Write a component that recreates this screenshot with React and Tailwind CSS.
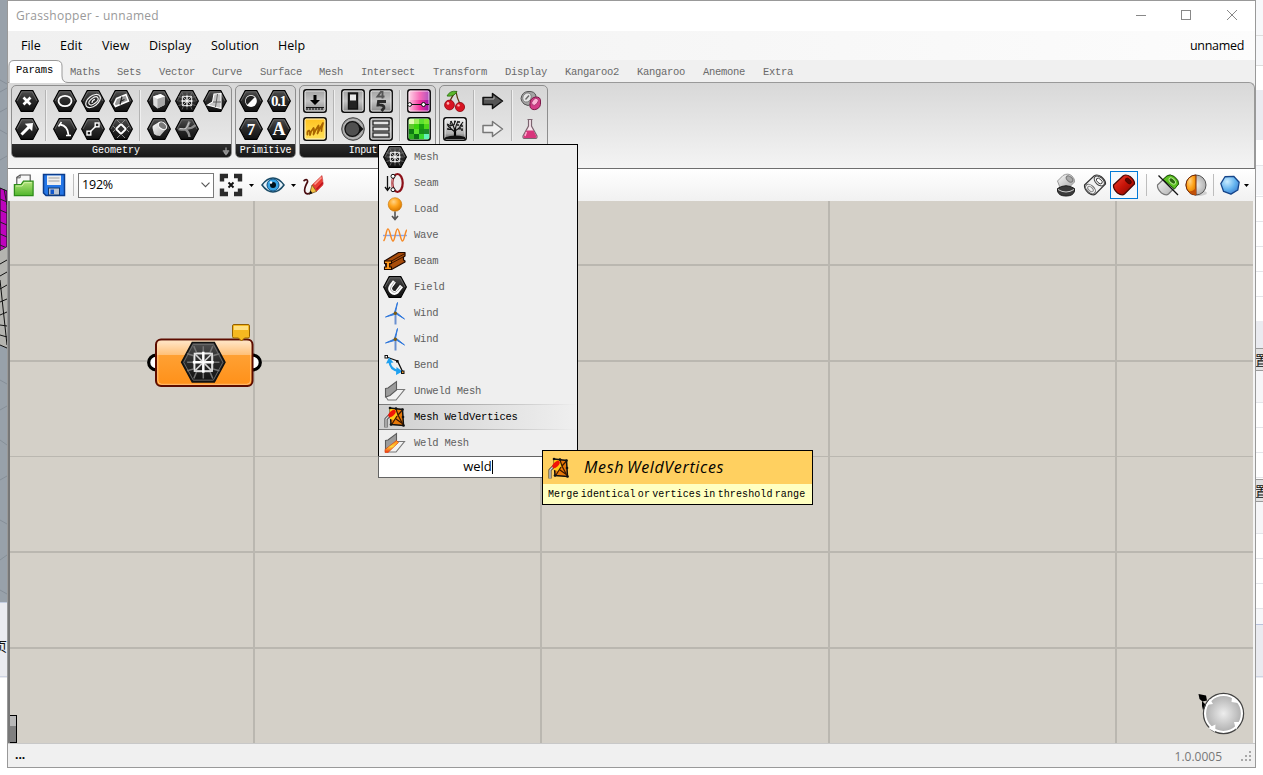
import React from "react";

const MONO = "font-['Liberation_Mono',monospace]";

/* ---------- shared gradients ---------- */
function Defs() {
  return (
    <svg width="0" height="0" className="absolute">
      <defs>
        <linearGradient id="hexg" x1="0" y1="0" x2="0" y2="1">
          <stop offset="0" stopColor="#505050" /><stop offset=".45" stopColor="#2b2b2b" /><stop offset="1" stopColor="#111" />
        </linearGradient>
        <linearGradient id="sqg" x1="0" y1="0" x2="0" y2="1">
          <stop offset="0" stopColor="#a0a0a0" /><stop offset=".5" stopColor="#c4c4c4" /><stop offset="1" stopColor="#868686" />
        </linearGradient>
        <linearGradient id="pink" x1="0" y1="0" x2="1" y2="0">
          <stop offset="0" stopColor="#ffd0e4" /><stop offset=".55" stopColor="#f5309c" /><stop offset="1" stopColor="#8a10a8" />
        </linearGradient>
        <linearGradient id="yel" x1="0" y1="0" x2="0" y2="1">
          <stop offset="0" stopColor="#ffc21e" /><stop offset="1" stopColor="#ffe25a" />
        </linearGradient>
        <linearGradient id="green" x1="0" y1="0" x2="0" y2="1">
          <stop offset="0" stopColor="#b6e57c" /><stop offset="1" stopColor="#4fb52b" />
        </linearGradient>
        <linearGradient id="hot" x1="0" y1="0" x2="0" y2="1">
          <stop offset="0" stopColor="#ff7a10" /><stop offset=".5" stopColor="#ffd83a" /><stop offset="1" stopColor="#f03010" />
        </linearGradient>
        <linearGradient id="treebg" x1="0" y1="0" x2="0" y2="1">
          <stop offset="0" stopColor="#f0f0f0" /><stop offset=".7" stopColor="#b0b0b0" /><stop offset="1" stopColor="#444" />
        </linearGradient>
        <linearGradient id="org" x1="0" y1="0" x2="0" y2="1">
          <stop offset="0" stopColor="#ffe9cf" /><stop offset=".33" stopColor="#ffc078" /><stop offset=".34" stopColor="#ffa033" /><stop offset="1" stopColor="#ff9018" />
        </linearGradient>
        <radialGradient id="ball" cx=".4" cy=".3" r=".7">
          <stop offset="0" stopColor="#ffd488" /><stop offset=".5" stopColor="#ffa51e" /><stop offset="1" stopColor="#d87800" />
        </radialGradient>
        <radialGradient id="blue" cx=".35" cy=".3" r=".75">
          <stop offset="0" stopColor="#c9ecff" /><stop offset=".6" stopColor="#62b2ee" /><stop offset="1" stopColor="#3f7fd0" />
        </radialGradient>
        <radialGradient id="silver">
          <stop offset="0" stopColor="#ededed" /><stop offset="1" stopColor="#b0b0b0" />
        </radialGradient>
        <linearGradient id="red" x1="0" y1="0" x2="1" y2="1">
          <stop offset="0" stopColor="#f04434" /><stop offset=".5" stopColor="#c81408" /><stop offset="1" stopColor="#780400" />
        </linearGradient>
        <linearGradient id="wht" x1="0" y1="0" x2="1" y2="1">
          <stop offset="0" stopColor="#fff" /><stop offset="1" stopColor="#a5a5a5" />
        </linearGradient>
      </defs>
    </svg>
  );
}

const Svg = ({ children, s = 24 }) => (
  <svg width={s} height={s} viewBox="0 0 24 24" fill="none" className="block shrink-0">{children}</svg>
);

/* ---------- hexagon icons ---------- */
const Hex = ({ children }) => (
  <Svg>
    <path d="M6.2 1.6H17.8L23.4 12L17.8 22.4H6.2L.6 12Z" fill="url(#hexg)" stroke="#000" strokeWidth="1.1" strokeLinejoin="round" />
    <path d="M6.9 2.8H17.1L22 12M2 12L6.9 2.8" stroke="#777" strokeWidth=".7" />
    {children}
  </Svg>
);
const MeshGlyph = () => (
  <g fill="none">
    <path d="M7 3.500L8.500 7H15.500L17 3.500M7 20.500L8.500 17H15.500L17 20.500M3.500 7.500L7 8.500V15.500L3.500 16.500M20.500 7.500L17 8.500V15.500L20.500 16.500M12 3.500V7M12 17V20.500M3.500 12H7M17 12H20.500" stroke="#747474" strokeWidth=".8" />
    <rect x="7.400" y="7.400" width="9.200" height="9.200" stroke="#e8e8e8" strokeWidth=".9" />
    <path d="M12 6.500V17.500M6.500 12H17.500" strokeWidth="1.300" stroke="#fff" />
    <path d="M7.500 7.500L16.500 16.500M16.500 7.500L7.500 16.500" strokeWidth=".8" stroke="#d4d4d4" />
    <path d="M10.800 12L12 10.800L13.200 12L12 13.200Z" fill="#fff" />
  </g>
);
const HexPoint = () => <Hex><path d="M8.500 8.500L15.500 15.500M15.500 8.500L8.500 15.500" stroke="#fff" strokeWidth="2.700" /></Hex>;
const HexVector = () => <Hex><path d="M6.500 17.500L14 10" stroke="#fff" strokeWidth="3" /><path d="M9.800 6.800L18 6L17.200 14.200Z" fill="#fff" /></Hex>;
const HexCircle = () => <Hex><ellipse cx="12" cy="12" rx="6.500" ry="5.200" stroke="#fff" strokeWidth="1.800" /></Hex>;
const HexSpiral = () => <Hex><g stroke="#eee" strokeWidth="1.200" transform="rotate(-38 12 12)"><ellipse cx="12" cy="12" rx="8.500" ry="5" /><ellipse cx="12.500" cy="12.200" rx="5.400" ry="2.800" /><path d="M10 12.800Q12 10.800 14.500 12" /></g></Hex>;
const HexPlane = () => <Hex><path d="M7.500 9.500L17 5.500L19.500 12L6.500 17.500L5 15Z" fill="#999" stroke="#fff" strokeWidth="1.600" /><path d="M11 12.500L15.500 10.500M13 7.500L11 15.500" stroke="#222" strokeWidth="1.200" /></Hex>;
const HexArc = () => <Hex><path d="M7 7.500Q15 9 15.500 18" stroke="#fff" strokeWidth="1.800" /><path d="M5.500 9.500L8.500 5M13 18.500H18" stroke="#fff" strokeWidth="1.500" /></Hex>;
const HexLine = () => <Hex><path d="M9 15L15 9" stroke="#fff" strokeWidth="1.500" /><rect x="6" y="14.200" width="3.800" height="3.800" fill="#222" stroke="#fff" strokeWidth="1.400" /><rect x="14.200" y="6" width="3.800" height="3.800" fill="#222" stroke="#fff" strokeWidth="1.400" /></Hex>;
const HexRect = () => <Hex><path d="M12 7L17 12L12 17L7 12Z" fill="#333" stroke="#fff" strokeWidth="1.900" /><path d="M12 7L16 3M12 7L8 3M17 12L20 9M17 12L20 15M7 12L4 9M7 12L4 15M12 17L8 21M12 17L16 21" stroke="#8a8a8a" /></Hex>;
const HexBox = () => <Hex><path d="M6 7.500L13.500 5L18 7.500L17.500 16L10.500 19.500L6.300 16Z" fill="#ddd" /><path d="M6 7.500L10.500 10L18 7.500L13.500 5Z" fill="#fff" /><path d="M10.500 10V19.500L17.500 16L18 7.500Z" fill="#a8a8a8" /></Hex>;
const HexMesh = () => <Hex><MeshGlyph /></Hex>;
const HexSurf = () => <Hex><path d="M11 5L18 4.500V19.500L4.500 16L9.500 13Z" fill="#c4c4c4" stroke="#fff" strokeWidth="1.100" /><path d="M10 13L18 13M14.500 5L12.500 18" stroke="#555" strokeWidth=".9" /></Hex>;
const HexBrep = () => <Hex><path d="M5.500 11Q5 9 7 8L12.500 4.800L19.500 11.500L13 19Q9 19 7 17Z" fill="url(#wht)" /><ellipse cx="15.500" cy="8.800" rx="4.600" ry="3.200" transform="rotate(40 15.500 8.800)" fill="#777" stroke="#fff" strokeWidth="1" /></Hex>;
const HexSub = () => <Hex><path d="M3.500 12Q8 13 10.500 12.500Q13 9 14.500 4.500M10.500 12.500Q14 15 14.500 20M12.500 11.500Q17 11.500 20.500 8" stroke="#8c8c8c" strokeWidth="2.400" /><path d="M5 11.500Q9 12 11 11.500Q13 9 13.800 5.500" stroke="#d8d8d8" strokeWidth=".8" /></Hex>;
const HexBool = () => <Hex><circle cx="12" cy="12" r="5.900" fill="#fff" /><path d="M8.300 15.700A5.200 5.200 0 0 1 15.700 8.300Z" fill="#222" /></Hex>;
const HexTxt = ({ t, size }) => (
  <Hex><text x="12" y={size > 15 ? 18 : 17} textAnchor="middle" fontFamily="Liberation Serif, serif" fontWeight="700" fontSize={size} fill="#fff" textLength={t === "0.1" ? 16 : undefined}>{t}</text></Hex>
);
const HexField = () => (
  <Hex><path d="M11.500 6.500L8 11A4.300 4.300 0 0 0 14 17L18.500 11" stroke="#fff" strokeWidth="3.800" /><path d="M13.500 8L11 11.300A1.200 1.200 0 0 0 12.600 13L15.500 9.500" stroke="#222" strokeWidth="1" /><path d="M11.300 7L8.300 11.300A3.800 3.800 0 0 0 14 16.300L18 11.500" stroke="#a8a8a8" strokeWidth=".9" /></Hex>
);

/* ---------- square icons ---------- */
const Sq = ({ fill = "url(#sqg)", children }) => (
  <Svg><rect x=".8" y=".8" width="22.400" height="22.400" rx="2.500" fill={fill} stroke="#0c0c0c" strokeWidth="1.500" /><rect x="2" y="2" width="20" height="20" rx="1.500" stroke="#fff" strokeOpacity=".7" />{children}</Svg>
);
const SqButton = () => <Sq><path d="M10.500 6H13.500V11H17L12 16L7 11H10.500Z" fill="#000" /><path d="M3 18.500H21M4 18V21M7 18V21M10 18V21M13 18V21M16 18V21M19 18V21" stroke="#111" strokeWidth="1.100" /></Sq>;
const SqScribble = () => <Sq fill="url(#yel)"><path d="M4.500 17.500Q4 14 6 13.500Q7 14 7 18Q8 14 10.500 11Q11.500 12 10.500 17.500Q13 12 15.500 8.500Q16 11 14.500 16.500Q17 11 20 6Q18.500 11 18.500 14" stroke="#a86400" strokeWidth="1.800" strokeLinecap="round" strokeLinejoin="round" /></Sq>;
const SqToggle = () => <Sq><rect x="7.500" y="4" width="9" height="16" fill="#222" stroke="#111" strokeWidth="1.400" /><rect x="9" y="5.500" width="6" height="6" fill="#e8e8e8" /></Sq>;
const SqDigit = () => <Sq><path d="M12.500 2L8.500 7.500H15.500M13.500 2V9.500" stroke="#555" strokeWidth="1.900" /><path d="M17 12.500H9.500L9 16Q15.500 15.500 15 19L12.500 22" stroke="#2a2a2a" strokeWidth="2.800" /></Sq>;
const Knob = () => <Svg><circle cx="12" cy="12" r="11.300" fill="#999" stroke="#444" strokeWidth="1" /><circle cx="12" cy="12" r="9.400" fill="#999" stroke="#ccc" strokeWidth=".8" /><path d="M17 6.500L22.500 12L17 17.500Z" fill="#111" /><circle cx="11.400" cy="12" r="7.400" fill="#505050" stroke="#111" strokeWidth="1.300" /></Svg>;
const SqList = () => <Sq>{[4, 10, 16].map((y) => <rect key={y} x="4" y={y} width="16" height="4" fill="#e4e4e4" stroke="#222" strokeWidth="1.200" />)}</Sq>;
const SqGraph = () => <Sq fill="url(#pink)"><rect x="2" y="2" width="20" height="9" fill="#fff" opacity=".28" /><path d="M2 15.500H22" stroke="#111" strokeWidth="1.200" /><circle cx="2.700" cy="15.500" r="1.900" fill="#fff" stroke="#111" /><circle cx="16.500" cy="15.500" r="2" fill="#fff" stroke="#111" /></Sq>;
const GREENS = ["#e0fcb0", "#a0f060", "#5ce030", "#7ce830", "#60c830", "#3cd60c", "#18a00f", "#4cd818", "#0c7a12", "#5ae02f", "#159018", "#1c8c28", "#30b020", "#0c7014", "#38d82c", "#40d888"];
const SqImage = () => <Sq fill="#1b9d16">{GREENS.map((c, i) => <rect key={i} x={2 + (i % 4) * 5} y={2 + Math.floor(i / 4) * 5} width="5" height="5" fill={c} />)}<rect x="17" y="17" width="5" height="5" fill="#62f5b8" /></Sq>;
const Cherry = () => <Svg><path d="M7 13Q8 8 13 3Q14 9 17 15" stroke="#5a3b12" strokeWidth="1.300" /><path d="M4 7Q7 1 14 2.500Q11 8 4 7Z" fill="#5cb82a" stroke="#2c6e10" strokeWidth=".8" /><circle cx="6.500" cy="16" r="4.900" fill="#d81422" stroke="#8c0810" strokeWidth=".8" /><circle cx="17" cy="18" r="4.600" fill="#d81422" stroke="#8c0810" strokeWidth=".8" /><circle cx="5" cy="14.400" r="1.300" fill="#ffb0b0" /><circle cx="15.500" cy="16.400" r="1.200" fill="#ffb0b0" /></Svg>;
const Tree = () => <Sq fill="url(#treebg)"><path d="M12 20V11" stroke="#000" strokeWidth="2.200" /><path d="M12 15Q8 12 5 9M12 14Q16 12 19 7M12 13Q10 8 8 4M12 13Q13 8 15 4M5 12.500H9M15 12H20M4 7L8 9M17 9L20 5M11 8L12 4M7 6L9 9" stroke="#111" strokeWidth="1.100" /><g fill="#222">{[[5, 8], [8, 5], [12, 4.5], [16, 5], [19, 9], [5, 12], [19, 13], [10, 8], [15, 8], [7, 10.5], [17, 11]].map(([x, y], i) => <circle key={i} cx={x} cy={y} r="1.1" />)}</g><path d="M2 20.500Q11 17 22 20V22H2Z" fill="#111" /></Sq>;
const ArrowDark = () => <Svg><path d="M2 8.500H11.500V4.500L21.500 12L11.500 19.500V15.500H2Z" fill="#555" stroke="#111" strokeWidth="1.500" strokeLinejoin="round" /><path d="M3.500 10H13V7.500" stroke="#aaa" /></Svg>;
const ArrowLight = () => <Svg><path d="M2 8.500H11.500V4.500L21.500 12L11.500 19.500V15.500H2Z" fill="#f0f0f0" stroke="#777" strokeWidth="1.500" strokeLinejoin="round" /></Svg>;
const Capsules = () => <Svg><path d="M2 9.500Q3 3 9 2.500Q16 2 17 7Q18 12 13 15Q9 18 5 15Q2 12 2 9.500Z" fill="#a4a4a4" stroke="#555" /><ellipse cx="8" cy="8.500" rx="4" ry="4.800" transform="rotate(35 8 8.500)" fill="#e4e4e4" stroke="#777" strokeWidth=".8" /><path d="M6.500 10.500L10 6.500" stroke="#666" strokeWidth="1.300" /><path d="M11 14.500Q11 9 16.500 8Q22 7.500 21.500 13Q22 18 18 20Q13 22 11 18Z" fill="#d43c88" stroke="#7c1848" strokeWidth="1" /><ellipse cx="16" cy="12.800" rx="2.600" ry="4" transform="rotate(40 16 12.800)" fill="#fcb4d6" stroke="#a03068" strokeWidth=".8" /></Svg>;
const Flask = () => <Svg><path d="M8.500 2.500H13.500M9.500 3V9L4 19Q3.500 21.500 6 21.500H16Q18.500 21.500 18 19L12.500 9V3" fill="#f6e4ec" stroke="#7c6470" strokeWidth="1.200" /><path d="M7.500 13.500H14.500L17.500 19.500Q17.500 21 16 21H6Q4 21 4.500 19.500Z" fill="#d8347c" /><path d="M7.500 15L6 19" stroke="#ffb4d4" strokeWidth="1.300" /></Svg>;

/* ---------- menu icons ---------- */
const Seam = () => <Svg><path d="M4.500 5V19M2 16L4.500 19.500L7 16" stroke="#111" strokeWidth="1.300" /><ellipse cx="14.500" cy="12" rx="5.200" ry="9" stroke="#8c1018" strokeWidth="2.200" /><path d="M9.500 7.500Q8.500 12 9.500 17" stroke="#e8a0a0" /><circle cx="10" cy="5.300" r="2" fill="#fff" stroke="#111" /><circle cx="10" cy="18.700" r="2" fill="#fff" stroke="#111" /></Svg>;
const Load = () => <Svg><circle cx="12" cy="7.500" r="6.800" fill="url(#ball)" stroke="#c87400" strokeWidth=".6" /><path d="M12 14.500V22M9 19L12 22.500L15 19" stroke="#555" strokeWidth="1.600" /></Svg>;
const Wave = () => <Svg><path d="M0 12.500H24" stroke="#86a4ec" strokeWidth="1.400" /><path d="M.5 18C3 16 3 6 5 6S8 18 10 18S12.500 6 14.500 6S17.500 18 19.500 18S22 8 24 7" stroke="#f58a28" strokeWidth="1.500" /></Svg>;
const Beam = () => <Svg><path d="M1.500 12L15.500 3.500H22V7L20.500 8V11L22 12V13L8.500 20.500H4Z" fill="#a84c0a" stroke="#1e0800" strokeWidth="1.200" strokeLinejoin="round" /><path d="M8.500 12L22 4.500M7 15L20 8" stroke="#3c1600" /><path d="M1.500 12H8.500V14.500H6.700V18H8.500V20.500H1.500V18H3.300V14.500H1.500Z" fill="#ff9a1e" stroke="#1e0800" strokeWidth="1.100" /></Svg>;
const Wind = () => <Svg><path d="M12.500 11.500L14.500 1.500L11.500 11.500M12.500 12.500L21.500 18L13.500 11.500M11.500 12L2.500 16L11.500 13.500" fill="#3078dc" stroke="#3078dc" strokeWidth="1" /><path d="M12.500 13V23.500" stroke="#6a90d0" strokeWidth="2" /><circle cx="12.300" cy="12.200" r="1.700" fill="#7c5a10" /></Svg>;
const Bend = () => <Svg><path d="M3.500 4L14.500 8L19.500 18.500" stroke="#111" strokeWidth="1.300" /><path d="M6.500 8Q7 17 16 18" stroke="#1ea0f0" strokeWidth="2.300" /><path d="M3 10.500L6 4.500L10.500 9.500ZM13.500 14L19.500 18.500L13 22Z" fill="#1ea0f0" /><rect x="2" y="2.500" width="2.500" height="2.500" fill="#fff" stroke="#111" /><rect x="13" y="7" width="2.500" height="2.500" fill="#111" /><rect x="18.500" y="18" width="2.500" height="2.500" fill="#f8a030" stroke="#111" /></Svg>;
const WeldM = ({ hot }) => <Svg><path d="M3 18L13 10.500H21.500L13 21H5Z" fill="#f2f2f2" stroke="#777" strokeWidth="1.100" /><path d="M2.500 9.500L5 9L13.500 2.500V11L7 16.500L2.500 18Z" fill="#9c9c9c" stroke="#5c5c5c" strokeWidth="1.100" />{hot && <path d="M2 18.500L13.500 9.500L15.500 11.500L5 21.500H2Z" fill="url(#hot)" stroke="#d84010" strokeWidth=".7" />}</Svg>;
const WeldV = () => <Svg><path d="M7 3L19.500 4.500L20.500 20.500L8 19.500Z" fill="#e87808" stroke="#111" strokeWidth="1.500" /><path d="M6.500 3.500L13 5L15 10L11 15L7 14Z" fill="#ffc818" /><path d="M13 4L15 10L19.500 5M15 10L20.500 20.500M14 11L9 19M13 14L20 19" stroke="#3a1800" strokeWidth="1.200" /><path d="M3 22.500V14L8.500 8.500" stroke="#333" strokeWidth="3" /><path d="M3 22.500V14L8 9" stroke="#d8d8d8" strokeWidth="1.400" /><ellipse cx="9" cy="8.500" rx="4.600" ry="2.400" transform="rotate(-45 9 8.500)" fill="#f01408" /><g fill="#111">{[[7, 3], [19.5, 4.5], [20.5, 20.5], [8, 19.5], [13, 3.5], [20, 12]].map(([x, y], i) => <circle key={i} cx={x} cy={y} r="1.3" />)}</g></Svg>;

/* ---------- toolbar icons ---------- */
const Folder = () => <Svg s={23}><path d="M5 13V3.500L8.500 1H19V13Z" fill="#f8f8f8" stroke="#555" strokeWidth="1.200" /><path d="M8.500 1V4H5" stroke="#555" /><path d="M2.500 11H9.500L12 7.500H22V22.500H2.500Z" fill="url(#green)" stroke="#2c8c18" strokeWidth="1.300" /><path d="M4 12.500H10.500L13 9H20.500" stroke="#d5f5ae" /></Svg>;
const Save = () => <Svg><path d="M1.500 1.500H22.500V22.500H4L1.500 20Z" fill="#2476e6" stroke="#0b3c8c" strokeWidth="1.500" /><rect x="5" y="2.500" width="14" height="9.500" fill="#eee" /><path d="M6.500 5H17.500M6.500 8H17.500" stroke="#bbb" strokeWidth="1.300" /><rect x="6.500" y="15" width="11" height="7" fill="#bcc4cf" stroke="#133a70" /><rect x="8.500" y="16.500" width="3.500" height="4.500" fill="#1258cc" /></Svg>;
const Focus = () => <Svg><path d="M3 8.500V3H9M15 3H21V8.500M21 15.500V21H15M9 21H3V15.500" stroke="#2b2b2b" strokeWidth="4.400" /><path d="M9.500 9.500L14.500 14.500M14.500 9.500L9.500 14.500" stroke="#111" strokeWidth="1.900" /></Svg>;
const Eye = () => <Svg><path d="M1 12Q6 5 12 5T23 12Q18 19 12 19T1 12Z" fill="#e6f2fa" stroke="#184a66" strokeWidth="1.500" /><circle cx="12" cy="12" r="6" fill="#38a4e4" stroke="#105080" /><circle cx="12" cy="12" r="3" fill="#001018" /><circle cx="10" cy="9.500" r="1.300" fill="#fff" /></Svg>;
const Pencil = () => <Svg><path d="M1.500 8Q6 5 5.500 9Q1 17 3.500 20Q6 22 10 19" stroke="#4a0c10" strokeWidth="1.700" /><path d="M10 12L20 2.500Q21 7 21 12L14.500 18.500Z" fill="#e83c34" stroke="#c84444" strokeWidth=".6" /><path d="M12.500 11.500L19.500 4.500" stroke="#ff9c90" strokeWidth="1.600" /><path d="M14.500 16.500L21 9.500" stroke="#c01420" strokeWidth="1.800" /><path d="M10 12L14.500 18.500L7.500 21Z" fill="#f2c040" stroke="#6c4410" strokeWidth=".7" /><path d="M8.500 17.500L10.500 20.300L7 21.500Z" fill="#111" /></Svg>;
const Cyl = ({ fill, stroke, hole }) => (
  <g><path d="M1.500 12L11 3Q14 .8 18 3.500Q23 7.500 22.500 11L12.500 21Q10 23 5.500 20Q1 16 1.500 12Z" fill={fill} stroke={stroke} strokeWidth="1.200" /><ellipse cx="16.300" cy="8" rx="3.500" ry="2" transform="rotate(42 16.300 8)" fill={hole} stroke={stroke} strokeWidth=".9" /></g>
);
const PrevNone = () => <Svg><path d="M3.500 8L9 2.500Q14 -.5 18 3Q21 6 20.500 9L15 14.500H6Z" fill="url(#wht)" stroke="#999" /><ellipse cx="15.500" cy="6" rx="3.800" ry="2.300" transform="rotate(40 15.500 6)" fill="#aaa" stroke="#777" /><path d="M3.500 18V15.500Q12 10 20.500 15.500V18Q19.500 23 12 23T3.500 18Z" fill="#3a3a3a" stroke="#1c1c1c" /><path d="M4 16.500Q12 21.500 20 16.500" stroke="#ddd" strokeWidth=".9" /></Svg>;
const PrevWire = () => <Svg><Cyl fill="#f3f3f3" stroke="#333" hole="#fff" /><ellipse cx="16.300" cy="8" rx="6" ry="3.800" transform="rotate(42 16.300 8)" stroke="#444" /><ellipse cx="7.500" cy="16" rx="5.700" ry="3.600" transform="rotate(42 7.500 16)" stroke="#666" /><ellipse cx="7.500" cy="16" rx="3.400" ry="1.900" transform="rotate(42 7.500 16)" stroke="#888" /></Svg>;
const PrevRed = () => <Svg><Cyl fill="url(#red)" stroke="#4a0400" hole="#5c0602" /></Svg>;
const PrevSel = () => <Svg><Cyl fill="url(#wht)" stroke="#777" hole="#285c10" /><path d="M7 6.500L11 3Q14 .8 18 3.500Q23 7.500 22.500 11L18.500 16Z" fill="#5cc022" stroke="#205c08" /><ellipse cx="16.300" cy="8" rx="3.800" ry="2.200" transform="rotate(42 16.300 8)" fill="#2c6a10" stroke="#b8ee90" /><path d="M2.500 2.500L22 22" stroke="#111" strokeWidth="1.300" /></Svg>;
const HalfBall = () => <Svg><ellipse cx="14" cy="20" rx="9" ry="3" fill="#999" opacity=".4" /><circle cx="12" cy="12" r="10" fill="url(#silver)" stroke="#555" /><path d="M12 2A10 10 0 0 0 12 22Z" fill="url(#ball)" stroke="#7a2800" /><path d="M4.500 18.500Q9 18.500 12 15V22Q8 22 4.500 18.500Z" fill="#c05008" /></Svg>;
const Poly = () => <Svg s={22}><path d="M6.500 3L16 2.500L22 9L20.500 17.500L13 22L5 19L2 10.500Z" fill="url(#blue)" stroke="#154488" strokeWidth="1.400" strokeLinejoin="round" /></Svg>;
const Caret = () => <svg width="5" height="3" viewBox="0 0 5 3" className="block shrink-0"><path d="M0 0H5L2.500 3Z" fill="#000" /></svg>;

/* ---------- ribbon ---------- */
const GROUPS = [
  { name: "Geometry", more: true, width: "w-[221px]", label: "", clusters: [
    [[HexPoint, HexVector]],
    [[HexCircle, HexArc], [HexSpiral, HexLine], [HexPlane, HexRect]],
    [[HexBox, HexBrep], [HexMesh, HexSub], [HexSurf, null]],
  ] },
  { name: "Primitive", width: "w-[61px]", label: "tracking-[-0.3px]", clusters: [
    [[HexBool, () => <HexTxt t="7" size={17} />], [() => <HexTxt t="0.1" size={15} />, () => <HexTxt t="A" size={18} />]],
  ] },
  { name: "Input", width: "w-[137px]", label: "-ml-[9px] tracking-[-0.3px]", clusters: [
    [[SqButton, SqScribble]],
    [[SqToggle, Knob], [SqDigit, SqList]],
    [[SqGraph, SqImage]],
  ] },
  { name: "Util", width: "w-[109px]", label: "", clusters: [
    [[Cherry, Tree]], [[ArrowDark, ArrowLight]], [[Capsules, Flask]],
  ] },
];

function Group({ g }) {
  return (
    <div className={"flex h-[73px] shrink-0 flex-col overflow-hidden rounded-[5px] border border-[#8e8e8e] bg-linear-to-b from-[#d6d6d6] to-[#ececec] " + g.width}>
      <div className="flex h-[58px] shrink-0 px-px pt-px">
        {g.clusters.map((cl, i) => (
          <React.Fragment key={i}>
            {i > 0 && <div className="mx-[4px] my-[3px] w-[2px] shrink-0 border-l border-[#b4b4b4] bg-[#efefef]" />}
            {cl.map((col, j) => (
              <div key={j} className="flex w-7 shrink-0 flex-col">
                {col.map((Ic, k) => <div key={k} className="grid h-7 place-items-center">{Ic && <Ic />}</div>)}
              </div>
            ))}
          </React.Fragment>
        ))}
      </div>
      <div className={"-mx-px flex h-[14px] shrink-0 items-start justify-center overflow-hidden bg-linear-to-b from-[#2e2e2e] to-[#161616] text-[10px] leading-[13px] text-white " + MONO + (g.more ? " pl-[7px]" : "")}>
        <span className={g.more ? "flex-1 text-center" : g.label}>{g.name}</span>
        {g.more && <svg width="18" height="13" viewBox="0 0 18 13"><path d="M12 3.500V10M8.800 7H15.200M10 8L12 10.500L14 8" stroke="#999" strokeWidth="1.300" fill="none" /></svg>}
      </div>
    </div>
  );
}

const TABS = [["Maths", "w-[47px]"], ["Sets", "w-[42px]"], ["Vector", "w-[53px]"], ["Curve", "w-[48px]"], ["Surface", "w-[59px]"], ["Mesh", "w-[42px]"], ["Intersect", "w-[72px]"], ["Transform", "w-[72px]"], ["Display", "w-[60px]"], ["Kangaroo2", "w-[72px]"], ["Kangaroo", "w-[66px]"], ["Anemone", "w-[60px]"], ["Extra", "w-[40px]"]];
const MENU = [["File", "w-[39px]"], ["Edit", "w-[42px]"], ["View", "w-[47px]"], ["Display", "w-[62px]"], ["Solution", "w-[67px]"], ["Help", "w-[40px]"]];
const ITEMS = [["Mesh", HexMesh], ["Seam", Seam], ["Load", Load], ["Wave", Wave], ["Beam", Beam], ["Field", HexField], ["Wind", Wind], ["Wind", Wind], ["Bend", Bend], ["Unweld Mesh", WeldM], ["Mesh WeldVertices", WeldV], ["Weld Mesh", () => <WeldM hot />]];

const Sep = () => <div className="h-[22px] w-px shrink-0 bg-[#bdbdbd]" />;

function Toolbar() {
  return (
    <div className="flex h-[33px] shrink-0 items-center border-t border-[#6f6f6f] bg-linear-to-b from-white to-[#f1f1f1] pl-[4px]">
      <Folder />
      <div className="ml-[7px]"><Save /></div>
      <div className="ml-[7px] mr-[4px]"><Sep /></div>
      <div className="flex h-[25px] w-[136px] items-center justify-between border border-[#7a7a7a] bg-white pl-[3px] pr-[3px] text-[12.5px] leading-none tracking-[-0.2px]">
        <span>192%</span>
        <svg width="9" height="6" viewBox="0 0 9 6"><path d="M.5 .7L4.500 4.700L8.500 .7" fill="none" stroke="#555" strokeWidth="1.100" /></svg>
      </div>
      <div className="ml-[5px]"><Focus /></div>
      <div className="ml-[6px]"><Caret /></div>
      <div className="ml-[7px]"><Eye /></div>
      <div className="ml-[6px]"><Caret /></div>
      <div className="ml-[6px]"><Pencil /></div>
      <div className="ml-auto flex items-center pr-[6px]">
        <PrevNone />
        <div className="ml-[5px]"><PrevWire /></div>
        <div className="ml-[3px] grid h-[28px] w-[28px] place-items-center border border-[#0078d7] bg-[#f4f8fc]"><PrevRed /></div>
        <div className="ml-[8px] mr-[9px]"><Sep /></div>
        <PrevSel />
        <div className="ml-[4px] mr-[5px]"><HalfBall /></div>
        <Sep />
        <div className="ml-[5px] mr-[3px]"><Poly /></div>
        <Caret />
      </div>
    </div>
  );
}

/* ---------- canvas ---------- */
function Canvas() {
  return (
    <div className="h-[542px] shrink-0 overflow-hidden border-l-2 border-r-2 border-l-[#777] border-r-[#f4f4f4] bg-[#d4d0c8]">
      <svg width="1243" height="542" viewBox="10 201 1243 542" className="block">
        <g fill="#bab7b0">
          <rect x="253" y="201" width="2" height="542" /><rect x="540" y="201" width="2" height="542" /><rect x="828" y="201" width="2" height="542" /><rect x="1115" y="201" width="2" height="542" />
          <rect x="10" y="264" width="1243" height="2" /><rect x="10" y="360" width="1243" height="2" /><rect x="10" y="456" width="1243" height="1" /><rect x="10" y="551" width="1243" height="2" /><rect x="10" y="647" width="1243" height="2" />
        </g>
        {/* mesh parameter node */}
        <circle cx="156" cy="362.5" r="7.3" fill="#fff" stroke="#000" strokeWidth="3.2" />
        <circle cx="253" cy="362.500" r="7.300" fill="#fff" stroke="#000" strokeWidth="3.200" />
        <rect x="156" y="339.500" width="96.500" height="46.500" rx="5" fill="url(#org)" stroke="#5c0c00" strokeWidth="2" />
        <rect x="157.800" y="341.300" width="92.900" height="43" rx="4" fill="none" stroke="#ffe0b8" strokeOpacity=".6" />
        <g transform="translate(180.500 339.500) scale(1.900)">
          <path d="M6.200 1.600H17.800L23.400 12L17.800 22.400H6.200L.6 12Z" fill="url(#hexg)" stroke="#111" strokeWidth=".8" />
          <path d="M6.700 2.600H17.300L22.300 12L17.300 21.400H6.700L1.700 12Z" stroke="#6a6a6a" strokeWidth=".5" fill="none" />
          <MeshGlyph />
        </g>
        <path d="M234 324.500H248Q249.500 324.500 249.500 326V336.500Q249.500 338 248 338H244.500L241.500 341L238.500 338H234Q232.500 338 232.500 336.500V326Q232.500 324.500 234 324.500Z" fill="#f5b820" stroke="#946000" />
        <path d="M234 326H248V330H234Z" fill="#ffdf80" />
        {/* edge handle */}
        <rect x="9" y="715.500" width="7.500" height="27" fill="#808080" stroke="#000" /><rect x="10" y="716" width="6" height="10" fill="#b8b8b8" />
        {/* compass */}
        <path d="M1198.500 694L1206 695.500L1207 700.500L1202.500 701.500L1199.500 699Z" fill="#000" /><path d="M1202 701L1207 706L1203 710L1202 706Z" fill="#000" />
        <circle cx="1223.500" cy="713.500" r="18.500" fill="url(#silver)" stroke="#fff" strokeWidth="2.200" />
        <circle cx="1223.500" cy="713.500" r="20.100" fill="none" stroke="#444" strokeWidth="1.200" />
        <path d="M1206 705L1210 699L1213 704ZM1232 697L1238 703L1231.500 702ZM1208 728L1215.500 724.500L1215 732ZM1234 722L1240 722L1236 730Z" fill="#fff" />
      </svg>
    </div>
  );
}

function SearchMenu() {
  return (
    <div className="absolute left-[378px] top-[144px] w-[200px]">
      <div className="h-[312px] border-x border-t border-black bg-[#efefef]">
        <div className="-mt-px">
          {ITEMS.map(([t, Ic], i) => (
            <div key={i} className={"flex h-[26px] items-center pl-1 text-[10.5px] tracking-[-0.2px] " + MONO + (i === 10 ? " relative bg-linear-to-r from-[#d0d0d0] to-[#efefef] text-black before:absolute before:inset-x-0 before:top-0 before:h-px before:bg-linear-to-r before:from-[#777] before:to-[#efefef] after:absolute after:inset-x-0 after:bottom-0 after:h-px after:bg-linear-to-r after:from-[#777] after:to-[#efefef]" : " text-[#5f5f5f]")}>
              <Ic />
              <span className="ml-[7px] whitespace-pre pt-px">{t}</span>
            </div>
          ))}
        </div>
      </div>
      <div className="flex h-[22px] items-center justify-center border border-[#646464] bg-white font-['Open_Sans',sans-serif] text-[13px] leading-none text-black">
        <span className="border-r border-black pb-px">weld</span>
      </div>
      <div className="absolute left-[164px] top-[306px] w-[271px] border border-black bg-[#ffffc0]">
        <div className="flex h-[33px] items-center bg-[#ffd060] pl-[4px]">
          <WeldV />
          <span className="-mt-px ml-[13px] whitespace-nowrap font-['Open_Sans',sans-serif] text-[16px] italic tracking-[0.65px] text-black [word-spacing:-2px]">Mesh WeldVertices</span>
        </div>
        <div className={"h-[20px] whitespace-nowrap pl-[5px] text-[10px] leading-[22px] tracking-[0.1px] text-black [word-spacing:-3.9px] " + MONO}>Merge identical or vertices in threshold range</div>
      </div>
    </div>
  );
}

function LeftStrip() {
  return (
    <svg width="7" height="775" viewBox="0 0 7 775" className="block shrink-0">
      <rect width="7" height="602" fill="#98a1aa" />
      <path d="M0 80L7 84M0 92L7 88M0 112L7 108M0 130L7 134M0 160L7 156M0 380L7 384M0 410L7 406M0 440L7 445M0 480L7 476M0 520L7 524M0 560L7 555M0 590L7 594" stroke="#868f98" />
      <path d="M0 188L7 191V247L0 251Z" fill="#bd04bd" stroke="#111" />
      <path d="M4 189L7 205M0 199L7 202M0 210L7 213M0 222L7 225M0 234L7 237M0 245L7 248" stroke="#222" />
      <path d="M0 251L7 247V348L0 345Z" fill="#b4b4b0" />
      <path d="M0 264L7 260M0 276L7 272M0 289L7 285M0 302L7 299M0 315L7 312M0 325L7 326M0 335L7 337M0 345L7 348M0 280L7 345" stroke="#111" />
      <rect y="602" width="7" height="76" fill="#eaebf0" /><rect y="602" width="7" height="1" fill="#c2cce0" /><rect y="676" width="7" height="1" fill="#cfd5e4" />
      <text x="-6" y="651" fontSize="13" fontFamily="Noto Sans CJK SC, sans-serif" fill="#111">页</text>
    </svg>
  );
}
function RightStrip() {
  return (
    <svg width="7" height="775" viewBox="0 0 7 775" className="block shrink-0">
      <rect width="7" height="66" fill="#f7f8fa" /><rect y="35" width="7" height="1" fill="#ddd" /><rect y="65" width="7" height="1" fill="#ddd" />
      <rect y="90" width="7" height="50" fill="#eaebf0" /><rect y="165" width="7" height="30" fill="#f7f8fa" />
      {[165, 196, 221, 246, 271, 296, 402, 427, 452, 477, 533, 558, 583, 608].map((y) => <rect key={y} y={y} width="7" height="1" fill="#e4e5e9" />)}
      <rect y="321" width="7" height="27" fill="#eaebf0" />
      {[348, 479].map((y) => (
        <g key={y}><rect y={y} width="7" height="23" fill="#e1e1e1" /><rect y={y} width="7" height="1" fill="#999" /><rect y={y + 22} width="7" height="1" fill="#999" /><rect y={y + 23} width="7" height="31" fill="#f6f6f8" />
          <text x="-1" y={y + 16.5} fontSize="13" fontFamily="Noto Sans CJK SC, sans-serif" fill="#111">置</text></g>
      ))}
      <rect y="609" width="7" height="15" fill="#f7f8fa" /><rect y="624" width="7" height="54" fill="#eaebf0" /><rect y="624" width="7" height="1" fill="#b8c2dc" /><rect y="676" width="7" height="1" fill="#cfd5e4" />
    </svg>
  );
}

export default function App() {
  return (
    <div className="relative flex h-[775px] w-[1263px] overflow-hidden bg-white">
      <Defs />
      <LeftStrip />
      <div className="flex h-[768px] w-[1249px] shrink-0 flex-col border border-[#999] bg-[#f0f0f0] font-['Open_Sans',sans-serif]">
        <div className="flex h-[30px] shrink-0 items-center justify-between bg-white pl-2 text-[12px] leading-none text-[#999]">
          <span className="tracking-[0.3px]">Grasshopper - unnamed</span>
          <svg width="120" height="30" viewBox="1135 1 120 30" fill="none" stroke="#888" className="shrink-0">
            <path d="M1136 15.5H1146" /><rect x="1181.5" y="10.5" width="9" height="9" /><path d="M1227 10L1237 20M1237 10L1227 20" />
          </svg>
        </div>
        <div className="flex h-[29px] shrink-0 items-center bg-linear-to-r from-[#f0f0f0] to-[#fcfcfc] pl-[13px] pr-[11px] pt-[2px] text-[12.5px] leading-none text-black">
          {MENU.map(([m, w]) => <span key={m} className={w}>{m}</span>)}
          <span className="ml-auto tracking-[-0.3px]">unnamed</span>
        </div>
        <div className={"flex h-[22px] shrink-0 text-[10.5px] leading-[24px] tracking-[-0.3px] text-[#6a6a6a] " + MONO}>
          <div className="relative z-10 -mb-px w-[62px] shrink-0">
            <svg width="66" height="23" viewBox="0 0 66 23" className="absolute left-0 top-0"><path d="M1 23V6Q1 .5 6 .5H48Q54 .5 54 6V16Q54 22.5 60 22.5H66V23Z" fill="#fff" stroke="none" /><path d="M1 23V6Q1 .5 6 .5H48Q54 .5 54 6V16Q54 22.5 60 22.5H66" fill="none" stroke="#999" /></svg>
            <span className="relative block pl-2 leading-[20px] tracking-[-0.1px] text-black">Params</span>
          </div>
          {TABS.map(([t, w]) => <span key={t} className={"shrink-0 " + w}>{t}</span>)}
        </div>
        <div className="flex h-[86px] shrink-0 gap-[3px] rounded-tr-[6px] border-t border-r border-[#999] bg-linear-to-b from-[#d8d8d8] to-[#f4f4f4] pl-[3px] pt-[2px]">
          {GROUPS.map((g) => <Group key={g.name} g={g} />)}
        </div>
        <Toolbar />
        <Canvas />
        <div className="flex h-[24px] shrink-0 items-center justify-between border-t border-[#c8c8c8] bg-[#f0f0f0] pl-[7px] pt-[2px] text-[12px] leading-none text-[#777]">
          <span className="-mt-1 font-bold text-black">...</span>
          <div className="flex items-center gap-[19px] pr-[2px]">
            <span>1.0.0005</span>
            <svg width="12" height="12" viewBox="0 0 12 12" fill="#a8a8a8"><path d="M8 0H10V2H8ZM4 4H6V6H4ZM8 4H10V6H8ZM0 8H2V10H0ZM4 8H6V10H4ZM8 8H10V10H8Z" /></svg>
          </div>
        </div>
      </div>
      <RightStrip />
      <SearchMenu />
    </div>
  );
}
